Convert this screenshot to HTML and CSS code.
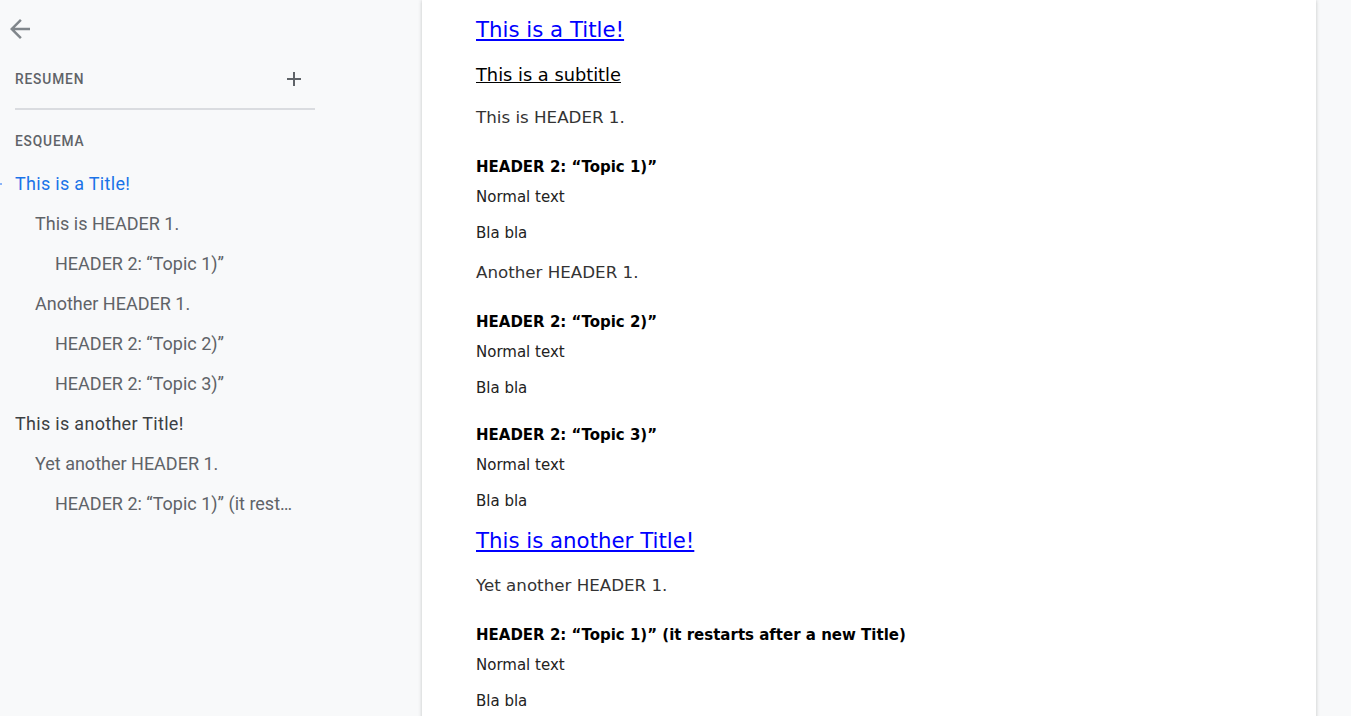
FILE: index.html
```html
<!DOCTYPE HTML>
<html>
<head>
  <meta charset="UTF-8">
  <title>Documento - Esquema</title>
  <meta name="viewport" content="width=device-width, initial-scale=1">
  <link rel="stylesheet" href="styles.css">
</head>
<body>
  <div class="app">
    <aside class="sidebar">
      <span class="active-mark"></span>
      <button class="back-button" title="Cerrar esquema">
        <svg viewBox="0 0 24 24" width="30" height="30"><path d="M20 11H7.83l5.59-5.59L12 4l-8 8 8 8 1.41-1.41L7.83 13H20v-2z"/></svg>
      </button>

      <div class="section-row">
        <span class="section-label">RESUMEN</span>
        <span class="add-icon">
          <svg viewBox="0 0 14 14" width="14" height="14"><path d="M6 0h2v6h6v2H8v6H6V8H0V6h6z"/></svg>
        </span>
      </div>
      <div class="divider"></div>

      <div class="section-label outline-label">ESQUEMA</div>
      <ul class="outline">
        <li class="lvl-title active">This is a Title!</li>
        <li class="lvl-1">This is HEADER 1.</li>
        <li class="lvl-2">HEADER 2: “Topic 1)”</li>
        <li class="lvl-1">Another HEADER 1.</li>
        <li class="lvl-2">HEADER 2: “Topic 2)”</li>
        <li class="lvl-2">HEADER 2: “Topic 3)”</li>
        <li class="lvl-title">This is another Title!</li>
        <li class="lvl-1">Yet another HEADER 1.</li>
        <li class="lvl-2">HEADER 2: “Topic 1)” (it restarts after a new Title)</li>
      </ul>
    </aside>

    <main class="page">
      <div class="doc-title">This is a Title!</div>
      <div class="doc-subtitle">This is a subtitle</div>
      <div class="doc-h1">This is HEADER 1.</div>
      <div class="doc-h2">HEADER 2: “Topic 1)”</div>
      <p class="doc-text">Normal text</p>
      <p class="doc-text">Bla bla</p>
      <div class="doc-h1">Another HEADER 1.</div>
      <div class="doc-h2">HEADER 2: “Topic 2)”</div>
      <p class="doc-text">Normal text</p>
      <p class="doc-text">Bla bla</p>
      <div class="doc-h2">HEADER 2: “Topic 3)”</div>
      <p class="doc-text">Normal text</p>
      <p class="doc-text">Bla bla</p>
      <div class="doc-title">This is another Title!</div>
      <div class="doc-h1">Yet another HEADER 1.</div>
      <div class="doc-h2">HEADER 2: “Topic 1)” (it restarts after a new Title)</div>
      <p class="doc-text">Normal text</p>
      <p class="doc-text">Bla bla</p>
    </main>
  </div>
</body>
</html>
```

FILE: styles.css
```css
body {
  margin: 0;
  background: #f8f9fa;
  font-family: Roboto, "Liberation Sans", sans-serif;
  height: 716px;
  overflow: hidden;
}

.app {
  display: flex;
  align-items: flex-start;
}

/* left outline panel */
.sidebar {
  position: relative;
  width: 300px;
  padding-left: 15px;
  margin-right: 107px;
}

.active-mark {
  position: absolute;
  left: 0;
  top: 183px;
  width: 2px;
  height: 2px;
  background: #8ab4f8;
}

.back-button {
  display: block;
  margin: 14px 0 0 -10px;
  padding: 0;
  width: 30px;
  height: 30px;
  border: none;
  background: none;
  fill: #80868b;
  cursor: pointer;
}

.back-button svg { display: block; }

.section-row {
  display: flex;
  align-items: center;
  justify-content: space-between;
  height: 20px;
  margin-top: 25px;
  padding-right: 14px;
}

.section-label {
  font-size: 13.75px;
  font-weight: 500;
  letter-spacing: 0.85px;
  color: #5f6368;
  line-height: 20px;
}

.add-icon {
  display: flex;
  fill: #5f6368;
}

.divider {
  height: 2px;
  background: #dadce0;
  margin-top: 19px;
}

.outline-label { margin-top: 21px; }

.outline {
  list-style: none;
  margin: 13px 0 0 0;
  padding: 0 14px 0 0;
}

.outline li {
  height: 40px;
  line-height: 40px;
  font-size: 18px;
  color: #5f6368;
  white-space: nowrap;
  overflow: hidden;
  text-overflow: ellipsis;
}

.outline .lvl-title {
  color: #3c4043;
  letter-spacing: 0.3px;
}
.outline .lvl-1 { padding-left: 20px; }
.outline .lvl-2 { padding-left: 40px; }
.outline .active { color: #1a73e8; }

/* document page */
.page {
  width: 840px;
  min-height: 716px;
  padding: 15px 0 0 54px;
  background: #fff;
  box-shadow: 0 0 4px rgba(60, 64, 67, 0.18), 0 1px 3px rgba(60, 64, 67, 0.12);
  font-family: "DejaVu Sans", Verdana, sans-serif;
  color: #222;
}

.doc-title {
  font-size: 21.3px;
  line-height: 30px;
  color: #0000ff;
  text-decoration: underline;
}

.doc-text + .doc-title { margin-top: 13px; }

.doc-subtitle {
  margin-top: 18px;
  font-size: 17.8px;
  line-height: 24px;
  color: #000;
  text-decoration: underline;
}

.doc-h1 {
  margin-top: 15px;
  font-size: 16.7px;
  line-height: 24px;
  color: #333;
}

.doc-subtitle + .doc-h1 { margin-top: 18px; }
.doc-title + .doc-h1 { margin-top: 17px; }

.doc-h2 {
  margin-top: 23px;
  font-size: 15px;
  font-weight: bold;
  line-height: 24px;
  color: #000;
}

.doc-h1 + .doc-h2 { margin-top: 26px; }

.doc-text {
  margin: 6px 0 0 0;
  font-size: 15px;
  line-height: 24px;
}

.doc-text + .doc-text { margin-top: 12px; }
```
